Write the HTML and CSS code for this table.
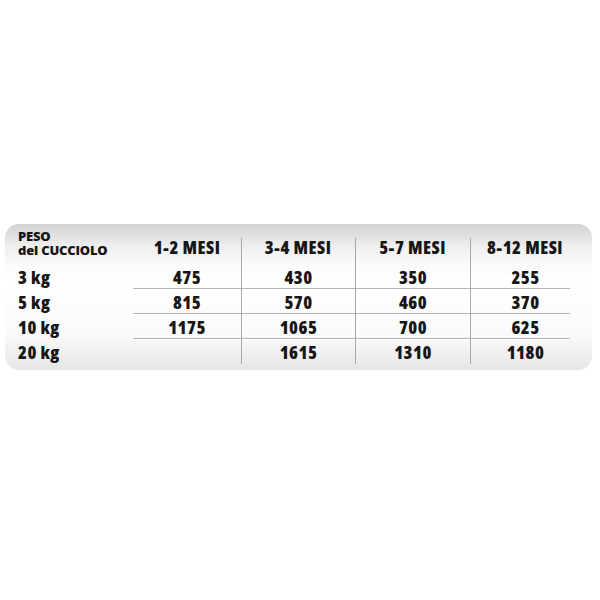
FILE: index.html
```html
<!DOCTYPE html>
<html>
<head>
<meta charset="utf-8">
<link rel="stylesheet" href="styles.css">
</head>
<body>
<div class="page">
  <div class="table">
    <div class="label head-label"><span class="hl">PESO</span><span class="hl">del CUCCIOLO</span></div>
    <div class="hcell c1">1-2 MESI</div>
    <div class="hcell">3-4 MESI</div>
    <div class="hcell">5-7 MESI</div>
    <div class="hcell c4">8-12 MESI</div>
    <div class="trail"></div>

    <div class="label">3 kg</div>
    <div class="cell c1 line">475</div>
    <div class="cell line vl">430</div>
    <div class="cell line vl">350</div>
    <div class="cell line vl c4">255</div>
    <div class="trail"></div>

    <div class="label">5 kg</div>
    <div class="cell c1 line">815</div>
    <div class="cell line vl">570</div>
    <div class="cell line vl">460</div>
    <div class="cell line vl c4">370</div>
    <div class="trail"></div>

    <div class="label">10 kg</div>
    <div class="cell c1 line">1175</div>
    <div class="cell line vl">1065</div>
    <div class="cell line vl">700</div>
    <div class="cell line vl c4">625</div>
    <div class="trail"></div>

    <div class="label">20 kg</div>
    <div class="cell c1"></div>
    <div class="cell vl">1615</div>
    <div class="cell vl">1310</div>
    <div class="cell vl c4">1180</div>
    <div class="trail"></div>
  </div>
</div>
</body>
</html>
```
FILE: styles.css
```css
html, body {
  margin: 0;
  padding: 0;
  background: #ffffff;
}
.page {
  padding: 224px 0 0 5px;
}
.table {
  width: 587px;
  height: 146px;
  box-sizing: border-box;
  border-radius: 14px;
  background: linear-gradient(to bottom, #d2d2d2 0px, #eeeeee 22px, #fbfbfb 40px, #ffffff 60px, #fafafa 110px, #e6e6e6 146px);
  display: grid;
  grid-template-columns: 128px 108px 114px 115px 100px 22px;
  grid-template-rows: 40px 25px 25px 25px 25px;
  font-family: "Open Sans", "DejaVu Sans Condensed", sans-serif;
  font-stretch: 75%;
  font-weight: 800;
  color: #161616;
  white-space: nowrap;
  letter-spacing: 0.5px;
}
.label {
  font-size: 18px;
  padding-left: 13px;
  display: flex;
  align-items: center;
}
.head-label {
  font-size: 13px;
  font-stretch: 100%;
  letter-spacing: -0.2px;
  flex-direction: column;
  align-items: flex-start;
  padding-top: 6px;
  box-sizing: border-box;
}
.hl {
  display: block;
  line-height: 13.5px;
}
.hcell {
  font-size: 18px;
  display: flex;
  justify-content: center;
  align-items: center;
  padding-top: 6px;
  box-sizing: border-box;
  background: linear-gradient(#a8a8a8, #a8a8a8) no-repeat left 14px / 1px calc(100% - 14px);
}
.hcell.c1 {
  background: none;
}
.cell {
  font-size: 18px;
  display: flex;
  justify-content: center;
  align-items: center;
  box-sizing: border-box;
  padding-top: 1px;
}
.c4 {
  padding-left: 10px;
}
.line {
  border-bottom: 1px solid #b4b4b4;
  box-shadow: 0 1px 0 #ffffff;
}
.vl {
  border-left: 1px solid #a8a8a8;
}
```
